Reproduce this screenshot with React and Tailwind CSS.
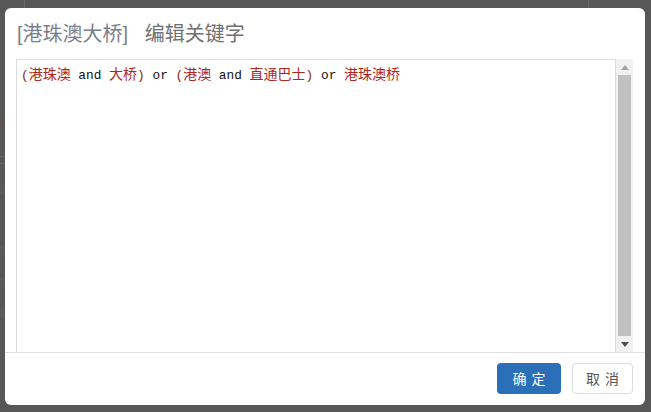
import React from "react";

const K = ({ children }) => (
  <span className="text-[14px] text-[#b0261c]">{children}</span>
);
const P = ({ children }) => (
  <span className="text-[12.8px] text-[#8a2a10]">{children}</span>
);
const O = ({ children }) => (
  <span className="text-[12.8px] text-[#111]">{children}</span>
);

export default function App() {
  return (
    <div className="relative w-[651px] h-[412px] bg-[#575757] overflow-hidden">
      {/* faint page content behind overlay */}
      <div className="absolute left-[24px] top-0 w-px h-[8px] bg-[#6a6a6a]" />
      <div className="absolute left-[588px] top-0 w-px h-[8px] bg-[#6a6a6a]" />
      <div className="absolute left-0 top-[118px] w-[4px] h-[10px] bg-[#5e5450]" />
      <div className="absolute left-0 top-[156px] w-[4px] h-[8px] border-y border-[#6a6a6a]" />
      <div className="absolute left-0 top-[184px] w-[4px] h-[10px] bg-[#5e5a58]" />
      <div className="absolute left-0 top-[246px] w-[4px] h-[10px] bg-[#5e5a58]" />
      <div className="absolute left-0 top-[278px] w-[4px] h-[10px] bg-[#5e5a58]" />
      <div className="absolute left-0 top-[308px] w-[4px] h-[10px] bg-[#5e5a58]" />

      <div className="flex pt-[8px] pl-[5px]">
        <div className="flex flex-col w-[640px] h-[397px] bg-white rounded-[6px] overflow-hidden">
          {/* header */}
          <div className="h-[51px] px-[12px] pt-[13px]">
            <div
              className="text-[20px] leading-[26px] text-[#777] whitespace-pre"
              style={{ fontFamily: '"Liberation Sans", "Noto Sans CJK SC", sans-serif' }}
            >
              <span className="text-[#7a7f8a]">[港珠澳大桥]</span>
              {"   "}
              <span className="text-[#707070]">编辑关键字</span>
            </div>
          </div>

          {/* body */}
          <div className="flex h-[293px] pl-[11px] pr-[12px]">
            <div className="flex-1 border-l border-t border-r border-[#dcdcdc] pl-[4px] pt-[6px]">
              <div
                className="whitespace-pre leading-[18px]"
                style={{ fontFamily: '"Liberation Mono", "Noto Sans CJK SC", monospace' }}
              >
                <P>(</P>
                <K>港珠澳</K>
                <O> and </O>
                <K>大桥</K>
                <P>)</P>
                <O> or </O>
                <P>(</P>
                <K>港澳</K>
                <O> and </O>
                <K>直通巴士</K>
                <P>)</P>
                <O> or </O>
                <K>港珠澳桥</K>
              </div>
            </div>
            {/* scrollbar */}
            <div className="flex flex-col w-[17px] bg-[#f1f1f1] border-t border-[#f1f1f1]">
              <div className="h-[15px] flex items-center justify-center">
                <svg width="8" height="5" viewBox="0 0 8 5">
                  <polygon points="4,0 8,5 0,5" fill="#a3a3a3" />
                </svg>
              </div>
              <div className="flex-1 mx-[2px] bg-[#c1c1c1]" />
              <div className="h-[16px] flex items-center justify-center">
                <svg width="8" height="5" viewBox="0 0 8 5">
                  <polygon points="0,0 8,0 4,5" fill="#505050" />
                </svg>
              </div>
            </div>
          </div>

          {/* footer */}
          <div className="h-[53px] border-t border-[#e0e0e0] flex justify-end items-start gap-[11px] pt-[10px] pr-[12px]">
            <button
              className="w-[64px] h-[31px] rounded-[4px] bg-[#2a6fb8] text-white text-[14px] tracking-[5px] pl-[5px]"
              style={{ fontFamily: '"Noto Sans CJK SC", sans-serif' }}
            >
              确定
            </button>
            <button
              className="w-[61px] h-[31px] rounded-[4px] bg-white border border-[#dcdcdc] text-[#555] text-[14px] tracking-[5px] pl-[5px]"
              style={{ fontFamily: '"Noto Sans CJK SC", sans-serif' }}
            >
              取消
            </button>
          </div>
        </div>
      </div>
    </div>
  );
}
